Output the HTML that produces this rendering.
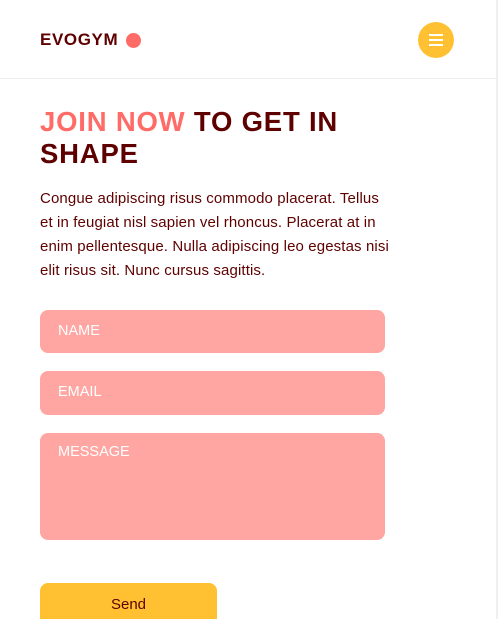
<!DOCTYPE html>
<html><head><style>
html,body{margin:0;width:498px;height:619px;overflow:hidden}
body{background:#fff;font-family:"Liberation Sans",sans-serif;position:relative}
.hdr{position:absolute;left:0;top:0;width:496px;height:78px;border-bottom:1px solid #eee}
.logo{position:absolute;left:40px;top:30px;font-weight:bold;font-size:17px;color:#5e0000;letter-spacing:0.6px}
.dot{position:absolute;left:126px;top:33px;width:15px;height:15px;border-radius:50%;background:#ff6b66}
.menu{position:absolute;left:418px;top:22px;width:36px;height:36px;border-radius:50%;background:#ffc132}
.menu i{position:absolute;left:11px;width:14px;height:1.5px;background:#fff}
.sb{position:absolute;right:0;top:0;width:2px;height:619px;background:#f0f0f0}
h1{position:absolute;left:40px;top:106px;margin:0;font-size:27.5px;line-height:32px;color:#5e0000;font-weight:bold;width:330px;letter-spacing:0.8px}
h1 span{color:#ff6b66}
p{position:absolute;left:40px;top:187px;margin:0;width:400px;font-size:15px;letter-spacing:0.12px;line-height:24px;color:#5e0000;white-space:nowrap}
.f{position:absolute;left:40px;width:345px;background:#ffa5a2;border-radius:8px;color:#fff;font-size:14.5px;box-sizing:border-box;padding-left:18px}
.btn{position:absolute;left:40px;top:583px;width:177px;height:36px;background:#ffc132;border-radius:8px 8px 0 0;text-align:center;line-height:43px;font-size:15px;color:#5e0000}
</style></head><body>
<div class="hdr"></div><div class="sb"></div>
<div class="logo">EVOGYM</div><div class="dot"></div>
<div class="menu"><i style="top:12px"></i><i style="top:17px"></i><i style="top:22px"></i></div>
<h1><span>JOIN NOW</span> TO GET IN SHAPE</h1>
<p>Congue adipiscing risus commodo placerat. Tellus<br>et in feugiat nisl sapien vel rhoncus. Placerat at in<br>enim pellentesque. Nulla adipiscing leo egestas nisi<br>elit risus sit. Nunc cursus sagittis.</p>
<div class="f" style="top:310px;height:43px;line-height:42px">NAME</div>
<div class="f" style="top:371px;height:44px;line-height:42px">EMAIL</div>
<div class="f" style="top:433px;height:107px;padding-top:11px">MESSAGE</div>
<div class="btn">Send</div>
</body></html>
